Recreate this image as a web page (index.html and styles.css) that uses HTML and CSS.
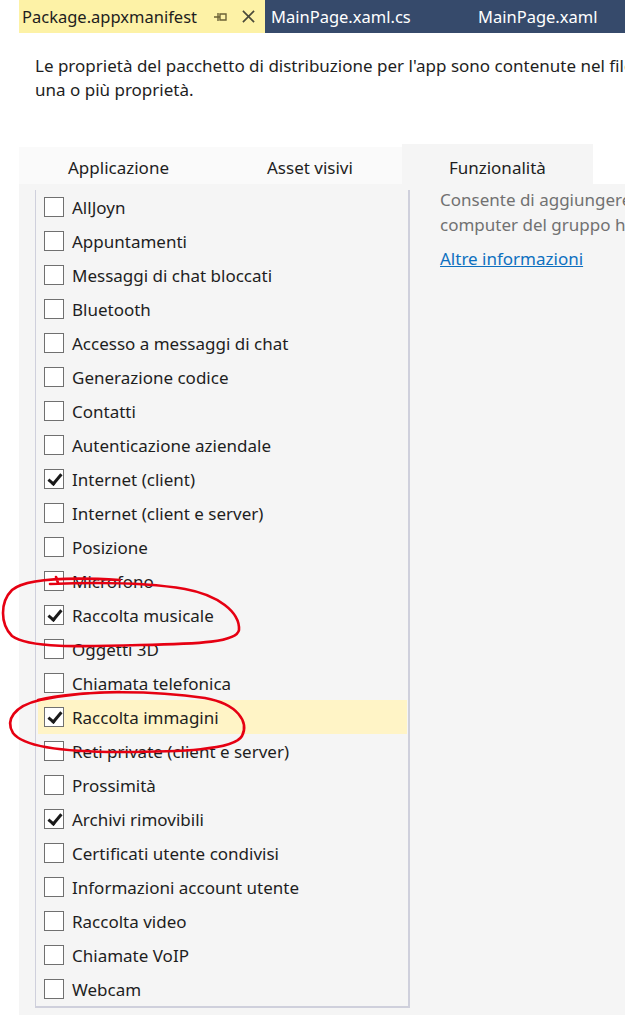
FILE: index.html
```html
<!DOCTYPE html>
<html lang="it">
<head>
<meta charset="utf-8">
<title>Package.appxmanifest</title>
<link rel="stylesheet" href="styles.css">
</head>
<body>
<div class="page">
  <div class="doc-tabs">
    <div class="doc-tab active">
      <span class="doc-title">Package.appxmanifest</span>
      <svg class="pin" width="14" height="10" viewBox="0 0 14 10"><path d="M0 5H4M4 1V9M4 5H6M6 2H12V8H6Z" fill="none" stroke="#6b6236" stroke-width="1.4"/></svg>
      <svg class="close" width="13" height="13" viewBox="0 0 14 14"><path d="M1 1L13 13M13 1L1 13" stroke="#4a4a3a" stroke-width="1.8"/></svg>
    </div>
    <div class="doc-tab dark first">MainPage.xaml.cs</div>
    <div class="doc-tab dark second">MainPage.xaml</div>
  </div>

  <p class="desc">Le proprietà del pacchetto di distribuzione per l'app sono contenute nel file<br>una o più proprietà.</p>

  <div class="tabs">
    <div class="tab">Applicazione</div>
    <div class="tab">Asset visivi</div>
    <div class="tab selected">Funzionalità</div>
  </div>

  <div class="panel">
    <div class="list">
      <div class="row"><span class="box"></span>AllJoyn</div>
      <div class="row"><span class="box"></span>Appuntamenti</div>
      <div class="row"><span class="box"></span>Messaggi di chat bloccati</div>
      <div class="row"><span class="box"></span>Bluetooth</div>
      <div class="row"><span class="box"></span>Accesso a messaggi di chat</div>
      <div class="row"><span class="box"></span>Generazione codice</div>
      <div class="row"><span class="box"></span>Contatti</div>
      <div class="row"><span class="box"></span>Autenticazione aziendale</div>
      <div class="row"><span class="box checked"></span>Internet (client)</div>
      <div class="row"><span class="box"></span>Internet (client e server)</div>
      <div class="row"><span class="box"></span>Posizione</div>
      <div class="row"><span class="box"></span>Microfono</div>
      <div class="row"><span class="box checked"></span>Raccolta musicale</div>
      <div class="row"><span class="box"></span>Oggetti 3D</div>
      <div class="row"><span class="box"></span>Chiamata telefonica</div>
      <div class="row current"><span class="box checked"></span>Raccolta immagini</div>
      <div class="row"><span class="box"></span>Reti private (client e server)</div>
      <div class="row"><span class="box"></span>Prossimità</div>
      <div class="row"><span class="box checked"></span>Archivi rimovibili</div>
      <div class="row"><span class="box"></span>Certificati utente condivisi</div>
      <div class="row"><span class="box"></span>Informazioni account utente</div>
      <div class="row"><span class="box"></span>Raccolta video</div>
      <div class="row"><span class="box"></span>Chiamate VoIP</div>
      <div class="row"><span class="box"></span>Webcam</div>
    </div>
    <div class="details">
      <p class="info">Consente di aggiungere<br>computer del gruppo h</p>
      <a class="more" href="#">Altre informazioni</a>
    </div>
  </div>

  <svg class="marks" width="625" height="1015" viewBox="0 0 625 1015">
    <path d="M56 577 L58 583 M50 584 C 100 582, 150 583, 185 589 C 218 595, 240 612, 239 630 C 237 642, 200 644, 140 645 C 80 647, 28 648, 12 636 C 0 624, 0 602, 12 590 C 26 578, 70 577, 120 580" fill="none" stroke="#e60012" stroke-width="2.6" stroke-linecap="round" stroke-linejoin="round"/>
    <path d="M38 700 C 80 690, 150 690, 205 698 C 238 704, 249 722, 242 736 C 234 750, 180 752, 120 752 C 70 752, 24 748, 13 733 C 5 720, 14 706, 40 700 C 70 694, 100 692, 120 692" fill="none" stroke="#e60012" stroke-width="2.6" stroke-linecap="round" stroke-linejoin="round"/>
  </svg>
</div>
</body>
</html>
```

FILE: styles.css
```css
html, body {
  margin: 0;
  padding: 0;
  background: #ffffff;
}
.page {
  position: relative;
  width: 625px;
  height: 1015px;
  overflow: hidden;
  font-family: "Noto Sans", "Open Sans", sans-serif;
  font-size: 17px;
  color: #1e1e1e;
}
.doc-tabs {
  display: flex;
  height: 33px;
  margin-left: 19px;
}
.doc-tab {
  display: flex;
  align-items: center;
  height: 33px;
  white-space: nowrap;
  font-size: 16.5px;
}
.doc-tab.active {
  background: #fdf2a6;
  color: #1e1e1e;
  width: 246px;
  padding-left: 3px;
  box-sizing: border-box;
}
.doc-title {
  width: 190px;
  flex-shrink: 0;
}
.pin {
  margin-left: 2px;
}
.close {
  margin-left: 14px;
}
.doc-tab.dark {
  background: #364a6b;
  color: #ffffff;
}
.doc-tab.first {
  padding-left: 6px;
  width: 213px;
  box-sizing: border-box;
}
.doc-tab.second {
  flex: 1;
}
.desc {
  margin: 21px 0 0 35px;
  white-space: nowrap;
  line-height: 24px;
}
.tabs {
  display: flex;
  align-items: flex-end;
  margin: 42px 0 0 19px;
  height: 40px;
}
.tab {
  height: 37px;
  padding: 0 49px 5px;
  box-sizing: border-box;
  display: flex;
  align-items: flex-end;
  background: #fafafa;
  line-height: 22px;
}
.tab.selected {
  height: 40px;
  padding: 0 47px 5px;
  background: #f5f5f5;
}
.panel {
  display: flex;
  margin-left: 19px;
  background: #f5f5f5;
  height: 831px;
}
.list {
  margin: 6px 0 0 16px;
  width: 375px;
  height: 818px;
  box-sizing: border-box;
  border-left: 1px solid #cfd0dc;
  border-right: 2px solid #cfd0dc;
  border-bottom: 2px solid #cfd0dc;
  padding: 0 1px 0 2px;
  flex-shrink: 0;
}
.row {
  display: flex;
  align-items: center;
  height: 34px;
  padding-left: 6px;
  white-space: nowrap;
}
.row.current {
  background: #fff4c6;
}
.box {
  position: relative;
  width: 20px;
  height: 20px;
  box-sizing: border-box;
  border: 1px solid #707070;
  background: #ffffff;
  margin-right: 8px;
  flex-shrink: 0;
}
.box.checked::after {
  content: "";
  position: absolute;
  left: 6px;
  top: 1px;
  width: 5px;
  height: 11px;
  border-right: 3px solid #1a1a1a;
  border-bottom: 3px solid #1a1a1a;
  transform: rotate(40deg);
}
.details {
  padding: 3px 0 0 30px;
  white-space: nowrap;
}
.info {
  margin: 0;
  color: #717171;
  line-height: 25px;
}
.more {
  display: inline-block;
  margin-top: 10px;
  color: #0e70c0;
  text-decoration: underline;
}
.marks {
  position: absolute;
  left: 0;
  top: 0;
  pointer-events: none;
}
```
